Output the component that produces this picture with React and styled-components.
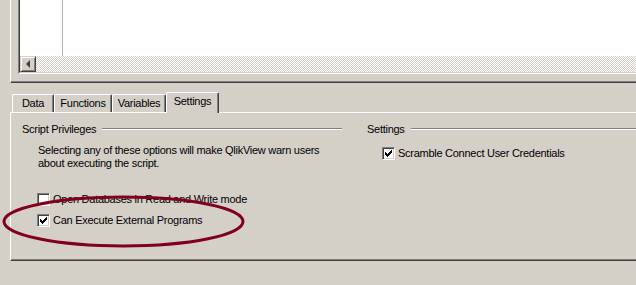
import styled, { createGlobalStyle } from 'styled-components';

const GlobalStyle = createGlobalStyle`
  body {
    margin: 0;
    background: #d4d0c8;
    overflow: hidden;
  }
`;

const Window = styled.div`
  position: relative;
  width: 636px;
  height: 285px;
  overflow: hidden;
  box-sizing: border-box;
  padding-left: 10px;
  background: #d4d0c8;
  font-family: "Liberation Sans", Arial, sans-serif;
  font-size: 11px;
  letter-spacing: -0.27px;
  color: #000;
`;

const TopFrame = styled.div`
  width: 700px;
  height: 83px;
  box-sizing: border-box;
  border-left: 1px solid #fff;
  border-bottom: 1px solid #404040;
  box-shadow: inset 0 -1px 0 #808080;
  padding-left: 7px;
`;

const Editor = styled.div`
  height: 74px;
  box-sizing: border-box;
  border-left: 1px solid #808080;
  border-bottom: 1px solid #fff;
  display: flex;
`;

const EditorInner = styled.div`
  flex: 1;
  display: flex;
  flex-direction: column;
  border-left: 1px solid #404040;
  border-bottom: 1px solid #d4d0c8;
  background: #fff;
`;

const CodeArea = styled.div`
  flex: 1;
  display: flex;
`;

const Gutter = styled.div`
  width: 43px;
  box-sizing: border-box;
  border-right: 1px solid #b4b4b4;
`;

const ScrollBar = styled.div`
  height: 16px;
  display: flex;
  background-color: #fff;
  background-image: repeating-conic-gradient(#d4d0c8 0 25%, #fff 0 50%);
  background-size: 2px 2px;
`;

const ScrollButton = styled.div`
  width: 16px;
  height: 16px;
  box-sizing: border-box;
  display: flex;
  align-items: center;
  justify-content: center;
  background: #d4d0c8;
  border: 1px solid;
  border-color: #d4d0c8 #404040 #404040 #d4d0c8;
  box-shadow: inset 1px 1px 0 #fff, inset -1px -1px 0 #808080;
`;

const LeftArrow = styled.span`
  width: 0;
  height: 0;
  margin-left: -1px;
  border-top: 4px solid transparent;
  border-bottom: 4px solid transparent;
  border-right: 4px solid #404040;
`;

const TabRow = styled.div`
  position: relative;
  z-index: 1;
  margin-top: 9px;
  height: 20px;
  display: flex;
  align-items: flex-end;
  padding-left: 2px;
`;

const Tab = styled.div`
  width: ${(p) => p.$width}px;
  height: ${(p) => (p.$active ? 21 : 18)}px;
  margin-bottom: ${(p) => (p.$active ? -1 : 0)}px;
  box-sizing: border-box;
  padding-top: 2px;
  text-align: center;
  line-height: 13px;
  background: #d4d0c8;
  border-left: 1px solid #fff;
  border-top: 1px solid #fff;
  border-right: 1px solid #404040;
  border-radius: 2px 2px 0 0;
  box-shadow: inset -1px 0 0 #808080;
`;

const Panel = styled.div`
  width: 700px;
  height: 149px;
  box-sizing: border-box;
  border-top: 1px solid #fff;
  border-left: 1px solid #fff;
  border-bottom: 1px solid #404040;
  box-shadow: inset 0 -1px 0 #808080;
  padding: 9px 0 0 11px;
  display: grid;
  grid-template-columns: 345px 1fr;
  align-items: start;
`;

const Column = styled.div`
  display: flex;
  flex-direction: column;
`;

const GroupHeader = styled.div`
  height: 14px;
  line-height: 14px;
  display: flex;
  align-items: center;
`;

const Rule = styled.div`
  flex: 1;
  height: 0;
  border-top: 1px solid #808080;
  border-bottom: 1px solid #fff;
  margin-left: 6px;
  margin-right: ${(p) => p.$gap || 0}px;
`;

const Description = styled.div`
  margin-top: 8px;
  padding-left: 16px;
  line-height: 13px;
`;

const CheckRow = styled.label`
  display: flex;
  align-items: center;
  gap: 3px;
  height: 13px;
  line-height: 13px;
  padding-left: 15px;
  margin-top: ${(p) => p.$top}px;
  white-space: nowrap;
`;

const Box = styled.span`
  width: 13px;
  height: 13px;
  box-sizing: border-box;
  flex: none;
  display: flex;
  align-items: center;
  justify-content: center;
  background: #fff;
  border: 1px solid;
  border-color: #808080 #fff #fff #808080;
  box-shadow: inset 1px 1px 0 #404040, inset -1px -1px 0 #d4d0c8;
`;

const Annotation = styled.svg`
  position: absolute;
  left: 0;
  top: 190px;
  pointer-events: none;
`;

function Checkbox({ checked, label, top }) {
  return (
    <CheckRow $top={top}>
      <Box>
        {checked && (
          <svg width="7" height="7" viewBox="0 0 7 7" shapeRendering="crispEdges">
            <path
              fill="#000"
              d="M6 0h1v1h-1z M5 1h2v1h-2z M0 2h1v1h-1z M4 2h3v1h-3z M0 3h2v1h-2z M3 3h3v1h-3z M0 4h5v1h-5z M1 5h3v1h-3z M2 6h1v1h-1z"
            />
          </svg>
        )}
      </Box>
      <span>{label}</span>
    </CheckRow>
  );
}

const tabs = [
  { name: 'Data', width: 42 },
  { name: 'Functions', width: 58 },
  { name: 'Variables', width: 54 },
  { name: 'Settings', width: 53, active: true },
];

export default function App() {
  return (
    <Window>
      <GlobalStyle />
      <TopFrame>
        <Editor>
          <EditorInner>
            <CodeArea>
              <Gutter />
            </CodeArea>
            <ScrollBar>
              <ScrollButton>
                <LeftArrow />
              </ScrollButton>
            </ScrollBar>
          </EditorInner>
        </Editor>
      </TopFrame>

      <TabRow>
        {tabs.map((t) => (
          <Tab key={t.name} $width={t.width} $active={t.active}>
            {t.name}
          </Tab>
        ))}
      </TabRow>

      <Panel>
        <Column>
          <GroupHeader>
            Script Privileges
            <Rule $gap={25} />
          </GroupHeader>
          <Description>
            Selecting any of these options will make QlikView warn users
            <br />
            about executing the script.
          </Description>
          <Checkbox label="Open Databases in Read and Write mode" top={23} />
          <Checkbox checked label="Can Execute External Programs" top={8} />
        </Column>
        <Column>
          <GroupHeader>
            Settings
            <Rule />
          </GroupHeader>
          <Checkbox checked label="Scramble Connect User Credentials" top={11} />
        </Column>
      </Panel>

      <Annotation width="250" height="65" viewBox="0 0 250 65">
        <ellipse cx="123.5" cy="31.5" rx="119.5" ry="24.5" fill="none" stroke="#80001e" strokeWidth="3" />
      </Annotation>
    </Window>
  );
}
